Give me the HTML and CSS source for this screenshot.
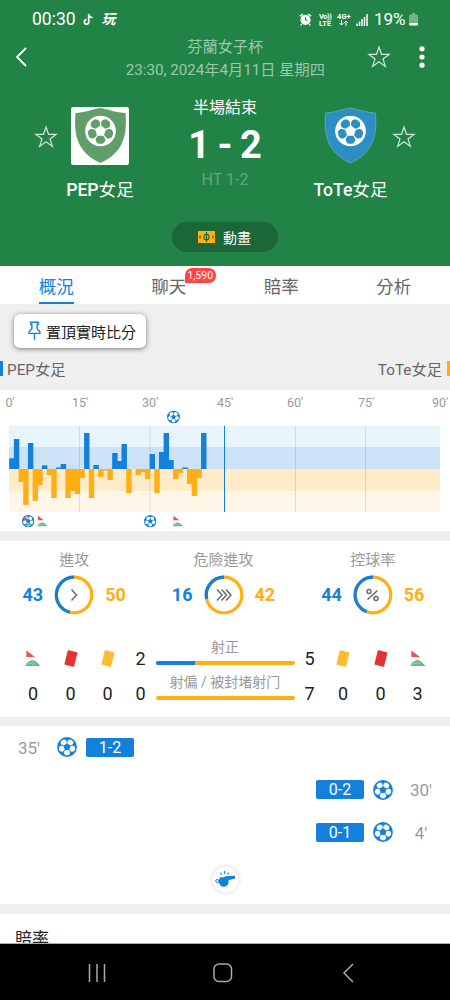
FILE: index.html
```html
<!DOCTYPE html>
<html lang="zh-Hant">
<head>
<meta charset="utf-8">
<meta name="viewport" content="width=device-width, initial-scale=1">
<title>芬蘭女子杯</title>
<link rel="stylesheet" href="styles.css">
</head>
<body>
<svg class="defs" aria-hidden="true">
  <symbol id="ball" viewBox="0 0 20 20">
    <circle class="ball-base" cx="10" cy="10" r="9.900"/>
    <g class="ball-panels">
      <path id="panel" d="M8.300 13h3.400q1.200 1.200 1.500 2.700q-.2 1.300-1.500 2.400a8.600 8.600 0 0 1-3.400 0q-1.300-1.100-1.500-2.400q.3-1.500 1.500-2.700z"/>
      <use href="#panel" transform="rotate(72 10 10)"/>
      <use href="#panel" transform="rotate(144 10 10)"/>
      <use href="#panel" transform="rotate(216 10 10)"/>
      <use href="#panel" transform="rotate(288 10 10)"/>
    </g>
  </symbol>
  <symbol id="star" viewBox="0 0 24 24"><path d="M12 2l2.500 7.300h7.800l-6.300 4.600 2.400 7.500-6.400-4.600-6.400 4.600L8 13.900 1.700 9.300h7.800z" fill="none" stroke="currentColor" stroke-width="1.200"/></symbol>
  <symbol id="corner" viewBox="0 0 17 18">
    <path d="M1.300.500v16" stroke="#ddd" stroke-width=".7"/>
    <path d="M1.500.500L10.500 7.500h-9z" fill="#ee4f4f"/>
    <path d="M.500 17c1-4 5-6.500 8-6.200 3 .3 5 3 8 6.200z" fill="#64b58b"/>
    <path d="M2 16c2-3 5-3 7 0M8 12.500l3 2.500" fill="none" stroke="#fff" stroke-width=".7" opacity=".7"/>
  </symbol>
</svg>
<div class="screen">
  <header class="hero">
    <div class="status">
      <span class="clock">00:30</span>
      <svg class="note" viewBox="0 0 10 12"><path d="M5.200 1v7.200a2 2 0 1 1-2-2M5.200 1.500c.4 1.800 1.600 2.600 3.300 2.700" fill="none" stroke="currentColor" stroke-width="1.600"/></svg>
      <span class="play">玩</span>
      <svg class="alarm" viewBox="0 0 14 14"><circle cx="7" cy="7.300" r="5.500"/><path d="M1 3.500L4 1M13 3.500L10 1M3 12l-1.200 1.200M11 12l1.200 1.200" stroke="#fff" stroke-width="1.500"/><path d="M7 4.500v3l2.300.7" stroke="#218346" stroke-width="1.100" fill="none"/></svg>
      <span class="net"><span class="vo">Vo))</span><br>LTE</span>
      <span class="net net4">4G+<svg viewBox="0 0 10 6"><path d="M3 0v5M1 3l2 2 2-2M7.500 6V1M5.500 3l2-2 2 2" fill="none" stroke="#fff"/></svg></span>
      <svg class="signal" viewBox="0 0 12 12"><path d="M1 12v-2.500M3.500 12V7.500M6 12V5M8.500 12V3M11 12V0" stroke="#fff" stroke-width="1.500" fill="none"/></svg>
      <span class="pct">19%</span>
      <svg class="battery" viewBox="0 0 9 13"><path d="M0 3q0-1.500 1.500-1.500H3V0h3v1.500h1.500Q9 1.500 9 3v7H0z" fill="#76b18c"/><path d="M0 10h9v1.500q0 1-1.200 1H1.200q-1.200 0-1.200-1z" fill="#fff"/></svg>
    </div>
    <div class="titlebar">
      <svg class="back" viewBox="0 0 12 20"><path d="M11 1L2 10l9 9" fill="none" stroke="#fff" stroke-width="1.800"/></svg>
      <div class="league"><div>芬蘭女子杯</div><div>23:30, 2024年4月11日 星期四</div></div>
      <svg class="star star-top"><use href="#star"/></svg>
      <svg class="more" viewBox="0 0 6 22"><circle cx="3" cy="2.800" r="2.600"/><circle cx="3" cy="11" r="2.600"/><circle cx="3" cy="19.200" r="2.600"/></svg>
    </div>
    <div class="match">
      <svg class="star"><use href="#star"/></svg>
      <div class="team home">
        <div class="crest"><svg viewBox="0 0 52 56"><path d="M26 0C33 1 43 5 51 5c2 24-3 40-25 50C4 45-1 29 1 5 9 5 18 1 26 0z" fill="#5f9e69"/><svg x="10.500" y="7.500" width="31" height="31"><use href="#ball"/></svg></svg></div>
        <div class="name">PEP<span>女足</span></div>
      </div>
      <div class="result"><div class="phase">半場結束</div><div class="score">1 - 2</div><div class="ht">HT 1-2</div></div>
      <div class="team away">
        <div class="crest"><svg viewBox="0 0 52 56"><path d="M26 0C33 1 43 5 51 5c2 24-3 40-25 50C4 45-1 29 1 5 9 5 18 1 26 0z" fill="#2b8fc6" stroke="#8ac6c5" stroke-width=".5"/><svg x="10.500" y="7.500" width="31" height="31"><use href="#ball"/></svg></svg></div>
        <div class="name">ToTe<span>女足</span></div>
      </div>
      <svg class="star"><use href="#star"/></svg>
    </div>
    <div class="animation">
      <svg viewBox="0 0 17 12"><path d="M0 0h17v12H0z" fill="#ffb011"/><path d="M8.500 1v10M2 4.500v3M15 4.500v3" stroke="#1b6737" stroke-width="1.200"/><ellipse cx="8.500" cy="6" rx="2.600" ry="2.800" fill="none" stroke="#1b6737" stroke-width="1.100"/></svg>
      <span>動畫</span>
    </div>
  </header>
  <nav class="tabs">
    <div class="tab active"><span>概況</span></div>
    <div class="tab"><span>聊天<b class="count">1,590</b></span></div>
    <div class="tab"><span>賠率</span></div>
    <div class="tab"><span>分析</span></div>
  </nav>
  <section class="pinned">
    <div class="pin"><svg viewBox="0 0 14 21"><path d="M3 1h8v2.500H9.800V8l3 3v2H1.200v-2l3-3V3.500H3zM7 13v7" fill="none" stroke="#1380dc" stroke-width="1.500"/></svg><span>置頂實時比分</span></div>
    <div class="sides"><span class="side-home">PEP女足</span><span class="side-away">ToTe女足</span></div>
  </section>
  <section class="momentum">
    <svg class="chart" viewBox="0 390 450 141">
      <g class="axis">
        <text x="10" y="407">0'</text><text x="80" y="407">15'</text><text x="150" y="407">30'</text><text x="225" y="407">45'</text><text x="295" y="407">60'</text><text x="366" y="407">75'</text><text x="440" y="407">90'</text>
      </g>
      <path d="M9 426h431v21H9z" fill="#e8f4fc"/>
      <path d="M9 447h431v22H9z" fill="#cbe2f7"/>
      <path d="M9 469h431v22H9z" fill="#fdebca"/>
      <path d="M9 491h431v21H9z" fill="#fff6e9"/>
      <path d="M79.500 426v86M150 426v86M295.500 426v86M365.500 426v86" stroke="#000" stroke-opacity=".1"/>
      <g id="bars"></g>
      <path d="M224.500 426v86" stroke="#1380dc"/>
      <use href="#ball" x="167" y="410.500" width="13" height="13"/>
      <use href="#ball" x="22" y="515" width="12.500" height="12.500"/>
      <path d="M24 516l5 4h-5z" fill="#ee4f4f"/><path d="M24 526q4-5 9-1z" fill="#64b58b"/>
      <use href="#corner" x="37" y="515.500" width="11" height="11.500"/>
      <use href="#ball" x="144" y="515" width="12.500" height="12.500"/>
      <use href="#corner" x="172.500" y="515.500" width="11" height="11.500"/>
    </svg>
  </section>
  <section class="stats">
    <div class="rings">
      <div class="metric"><div class="label">進攻</div><div class="duel"><b class="blue">43</b>
        <svg viewBox="0 0 40 40"><circle cx="20" cy="20" r="17.800" class="ring"/><path d="M20 2.200a17.800 17.800 0 0 0-4 35.100" class="arc"/><path d="M17.500 14.500l5 5.500-5 5.500" class="glyph"/></svg><b class="gold">50</b></div></div>
      <div class="metric"><div class="label">危險進攻</div><div class="duel"><b class="blue">16</b>
        <svg viewBox="0 0 40 40"><circle cx="20" cy="20" r="17.800" class="ring"/><path d="M20 2.200A17.800 17.800 0 0 0 2.700 24" class="arc"/><path d="M13 14.500l5 5.500-5 5.500M17.500 14.500l5 5.500-5 5.500M22 14.500l5 5.500-5 5.500" class="glyph"/></svg><b class="gold">42</b></div></div>
      <div class="metric"><div class="label">控球率</div><div class="duel"><b class="blue">44</b>
        <svg viewBox="0 0 40 40"><circle cx="20" cy="20" r="17.800" class="ring"/><path d="M20 2.200A17.800 17.800 0 0 0 13.700 36.700" class="arc"/><path d="M14.500 24.500L24.500 15.500" class="glyph"/><circle cx="16" cy="16.500" r="2" class="glyph"/><circle cx="23" cy="23.500" r="2" class="glyph"/></svg><b class="gold">56</b></div></div>
    </div>
    <div class="tally">
      <svg class="flag"><use href="#corner"/></svg><i class="card red"></i><i class="card yellow"></i><span>2</span>
      <div class="shots"><em>射正</em><div class="bar"><div style="width:28.500%"></div></div></div>
      <span>5</span><i class="card yellow"></i><i class="card red"></i><svg class="flag"><use href="#corner"/></svg>
      <span>0</span><span>0</span><span>0</span><span>0</span>
      <div class="shots"><em>射偏 / 被封堵射门</em><div class="bar"></div></div>
      <span>7</span><span>0</span><span>0</span><span>3</span>
    </div>
  </section>
  <section class="events">
    <div class="event"><time>35'</time><svg><use href="#ball"/></svg><b>1-2</b></div>
    <div class="event right"><time>30'</time><svg><use href="#ball"/></svg><b>0-2</b></div>
    <div class="event right"><time>4'</time><svg><use href="#ball"/></svg><b>0-1</b></div>
    <div class="whistle"><svg viewBox="0 0 20 16"><path d="M5 6.200h4l1-1L20 4.800v2.700l-6.500 1.700a5 5 0 1 1-9.700 1z" fill="#1380dc"/><circle cx="2.300" cy="10" r="1.600" fill="none" stroke="#1380dc"/><path d="M6.500 3.700L5.500 1.700M9.500 3V0M12.500 3.500l1-2" stroke="#1380dc" stroke-width="1.200"/></svg></div>
  </section>
  <section class="odds">賠率</section>
  <footer class="softkeys">
    <svg viewBox="0 0 18 20"><path d="M1.500 1v18M9 1v18M16.500 1v18"/></svg>
    <svg viewBox="0 0 18 20"><rect x="0" y="1" width="17.500" height="17.500" rx="5"/></svg>
    <svg viewBox="0 0 18 20"><path d="M13 1L4 10l9 9"/></svg>
  </footer>
</div>
<script src="chart.js"></script>
</body>
</html>
```
FILE: styles.css
```css
* { box-sizing: border-box; }
body { margin: 0; background: #fff; font-family: Roboto, "Noto Sans CJK TC", sans-serif; font-weight: 400; }
.defs { position: absolute; width: 0; height: 0; }
.ball-base { fill: var(--ball, #1380dc); }
.ball-panels { fill: var(--panel, #fff); }
svg { display: block; flex: none; overflow: visible; }
.screen { width: 450px; height: 1000px; display: flex; flex-direction: column; overflow: hidden; background: #efefef; }
.screen > * { flex: none; }

.hero { height: 266px; background: #218346; color: #fff; }
.status { height: 39px; padding: 0 32px; display: flex; align-items: center; line-height: 39px; }
.clock { width: 51.500px; font-size: 17.500px; }
.note { width: 11px; height: 13px; }
.play { font-size: 14px; font-weight: 700; font-style: italic; margin-left: 7px; width: 198px; }
.alarm { width: 13px; height: 13px; margin-right: 7px; fill: #fff; }
.net { font-size: 7.500px; line-height: 7px; font-weight: 700; width: 18px; }
.vo { letter-spacing: -.5px; }
.net4 { font-size: 7.500px; width: 19px; }
.net4 svg { width: 11px; height: 6px; margin-left: 1px; }
.signal { width: 12px; height: 12px; margin-right: 6px; }
.pct { font-size: 17.200px; width: 35px; letter-spacing: -.2px; }
.battery { width: 9px; height: 13px; }

.titlebar { height: 48px; padding: 0 25px 0 15px; display: flex; }
.back { width: 12px; height: 20px; margin-top: 8px; }
.league { width: 396px; text-align: center; color: #9bc8aa; font-size: 15.200px; line-height: 23px; margin: -3px -52px 0 4.500px; white-space: nowrap; }
.star { width: 24px; height: 24px; color: #d3e6da; }
.star-top { margin: 6px 28px 0 0; }
.more { width: 6px; height: 22px; margin-top: 7px; fill: #fff; }

.match { height: 135px; display: grid; grid-template-columns: 24px 84px 166px 84px 24px; justify-content: center; padding-top: 8px; }
.match > .star { margin-top: 30px; }
.match .home { justify-self: center; }
.match .away { margin-left: -2.500px; }
.team { width: 90px; display: flex; flex-direction: column; align-items: center; }
.crest { width: 58px; height: 58px; margin-top: 12px; padding: 1px 2.500px; border-radius: 2px; --ball: #fff; }
.home .crest { background: #fff; --panel: #5f9e69; }
.away .crest { --panel: #2b8fc6; }
.crest > svg { width: 53px; height: 56px; }
.crest #panel, .crest use { stroke: none; }
.name { font-size: 17.600px; font-weight: 500; line-height: 26px; margin-top: 12px; white-space: nowrap; }
.name span { font-weight: 400; }
.result { text-align: center; }
.phase { font-size: 16px; line-height: 26px; }
.score { font-size: 38px; font-weight: 700; line-height: 46px; margin-top: 1px; word-spacing: -2px; }
.ht { font-size: 16px; line-height: 24px; color: #62a77b; }
.animation { width: 106px; height: 30px; margin: 0 auto; border-radius: 15px; background: #1b6737; display: flex; align-items: center; padding-left: 26px; gap: 8px; font-size: 14px; line-height: 30px; }
.animation svg { width: 17px; height: 12px; }
.animation span { padding-top: 2px; }

.tabs { height: 38px; background: #fff; display: grid; grid-template-columns: repeat(4, 1fr); color: #666; font-size: 17.500px; line-height: 42px; text-align: center; }
.tab span { display: inline-block; position: relative; height: 38px; }
.active span { color: #1380dc; border-bottom: 2.500px solid #1380dc; }
.count { position: absolute; left: 33.500px; top: 2px; width: 31px; height: 14.500px; border-radius: 7px 7px 7px 0; background: #ff4545; color: #fff; font-size: 10.500px; font-weight: 400; line-height: 15px; }

.pinned { height: 86px; padding-top: 10px; }
.pin { margin-left: 14px; width: 132px; height: 34px; border-radius: 6px; background: #fff; box-shadow: 0 1px 5px rgba(0,0,0,.5); display: flex; align-items: center; padding-left: 14px; gap: 5px; font-size: 15px; line-height: 34px; color: #222; }
.pin svg { width: 13px; height: 20px; }
.pin span { padding-top: 3px; }
.sides { margin-top: 13px; display: flex; justify-content: space-between; align-items: center; font-size: 15.300px; line-height: 19px; height: 15px; color: #666; }
.sides span { height: 15px; }
.side-home { border-left: 3px solid #1380dc; padding-left: 4px; }
.side-away { border-right: 3px solid #ffae13; padding-right: 5px; }

.momentum { height: 141px; background: #fff; margin-bottom: 10px; }
.chart { width: 450px; height: 141px; }
.axis { font-size: 12.500px; fill: #999; text-anchor: middle; }

.stats { height: 176px; background: #fff; margin-bottom: 9px; }
.rings { display: grid; grid-template-columns: repeat(3, 149.300px); justify-content: center; padding: 7px 3px 0 0; }
.label { text-align: center; color: #999; font-size: 15px; line-height: 24px; }
.duel { display: flex; justify-content: center; align-items: center; gap: 11px; font-size: 18px; margin-top: 2px; line-height: 42px; }
.duel svg { width: 40px; height: 40px; }
.blue { color: #1380dc; }
.gold { color: #ffae13; }
.ring { fill: none; stroke: #ffae13; stroke-width: 3.200; }
.arc { fill: none; stroke: #1380dc; stroke-width: 3.200; }
.glyph { fill: none; stroke: #666; stroke-width: 1.400; }
.tally { display: grid; grid-template-columns: 38px 37px 37px 29px 140px 29px 38px 37px 37px; grid-template-rows: 35px 35px; justify-content: center; justify-items: center; align-items: center; margin-top: 25px; font-size: 18px; color: #222; }
.flag { width: 16px; height: 17px; }
.card { width: 9.500px; height: 14.500px; border-radius: 1px; transform: rotate(14deg); }
.red { background: #e63235; }
.yellow { background: #ffbc33; }
.shots { align-self: start; width: 139px; margin-top: -4px; display: flex; flex-direction: column; align-items: center; }
.shots em { font-style: normal; font-size: 14px; line-height: 20px; color: #999; white-space: nowrap; }
.bar { width: 100%; height: 4px; margin-top: 4px; border-radius: 2px; background: #ffae13; overflow: hidden; }
.bar div { height: 100%; background: #1380dc; }

.events { height: 178px; background: #fff; margin-bottom: 10px; }
.event { height: 42.500px; display: flex; align-items: center; padding: 0 10px; }
.event.right { flex-direction: row-reverse; }
.event time { width: 38px; text-align: center; font-size: 17px; line-height: 22px; padding-top: 1px; color: #999; }
.event svg { width: 20px; height: 20px; margin: 0 9px; }
.event b { width: 48px; height: 19px; border-radius: 2px; background: #1380dc; color: #fff; font-size: 16px; font-weight: 400; line-height: 19px; text-align: center; }
.whistle { width: 31px; height: 31px; margin: 10px auto 0; border: 3px solid #f1f3f5; border-radius: 50%; display: grid; place-items: center; }
.whistle svg { width: 20px; height: 16px; }
.odds { height: 30px; background: #fff; border-bottom: 1px solid #aaa; padding: 12px 15px 0; font-size: 17px; line-height: 27px; color: #222; overflow: hidden; }
.softkeys { height: 56px; background: #000; display: flex; justify-content: center; align-items: center; gap: 108px; padding: 2px 4px 0 0; }
.softkeys svg { width: 18px; height: 20px; fill: none; stroke: #aaa; stroke-width: 1.500; }
```
FILE: chart.js
```js
// Attack pressure per minute: positive for the home side, negative for the away side.
const pressure = [10.7, 30, -13, -36, 26, -32, -16, 3.7, -6, -29, 1.5, 5, -29, -22, -25, -9, 36, -29, 4, -8, -1.5, -11, 16, 8, 25, -24, 0, -6, -3, -10, 15, -24, 17, 36, 9, -10, -4, 1.5, -15, -27, -9, 36];
const bars = document.getElementById('bars');
pressure.forEach((value, minute) => {
  const bar = document.createElementNS('http://www.w3.org/2000/svg', 'rect');
  bar.setAttribute('x', 9.2 + minute * 4.68);
  bar.setAttribute('y', value > 0 ? 469 - value : 469);
  bar.setAttribute('width', 5.4);
  bar.setAttribute('height', Math.abs(value));
  bar.setAttribute('fill', value > 0 ? '#1380dc' : '#ffae13');
  bars.appendChild(bar);
});
```
